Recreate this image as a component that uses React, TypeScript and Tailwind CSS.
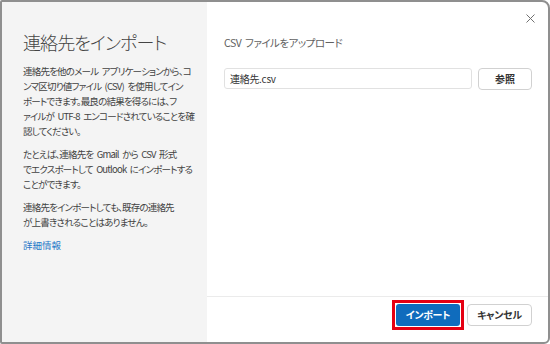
function CloseIcon() {
    return (
        <svg width="9" height="9" viewBox="0 0 9 9" className="block">
            <path d="M0.5 0.5L8.5 8.5M8.5 0.5L0.5 8.5" stroke="#707070" strokeWidth="1" fill="none"/>
        </svg>
    )
}

function ImportDialog() {
    return (
        <div className="w-[550px] h-[344px] flex border-2 border-[#8f8f8f] rounded-tr-[8px] rounded-br-[6px] rounded-l-[2px] overflow-hidden bg-white font-['Noto_Sans_CJK_JP','Noto_Sans',sans-serif] [font-feature-settings:'palt'] text-[#424242]">
            <div className="w-[205px] shrink-0 bg-[#f4f4f4] pl-[21px] pt-[27px]">
                <h1 className="text-[18px] leading-[26px] font-light tracking-[-0.9px] text-[#444] whitespace-nowrap">連絡先をインポート</h1>

                <div className="mt-[9px] text-[9.5px] leading-[15px] tracking-[-0.8px] [word-spacing:2px] whitespace-nowrap">
                    <p>
                        連絡先を他のメール アプリケーションから、コ<br/>
                        ンマ区切り値ファイル (CSV) を使用してイン<br/>
                        ポートできます。最良の結果を得るには、フ<br/>
                        ァイルが UTF-8 エンコードされていることを確<br/>
                        認してください。
                    </p>
                    <p className="mt-[8px]">
                        たとえば、連絡先を Gmail から CSV 形式<br/>
                        でエクスポートして Outlook にインポートする<br/>
                        ことができます。
                    </p>
                    <p className="mt-[8px]">
                        連絡先をインポートしても、既存の連絡先<br/>
                        が上書きされることはありません。
                    </p>
                    <p className="mt-[8px] tracking-[0px] text-[#1f78c8]">詳細情報</p>
                </div>
            </div>

            <div className="flex-1 flex flex-col">
                <div className="flex justify-end pt-[12px] pr-[13px] h-[24px]">
                    <CloseIcon/>
                </div>
                <div className="flex-1 pl-[17px] pr-[16px]">
                    <h2 className="mt-[9px] text-[10.5px] leading-[16px] tracking-[-0.5px] [word-spacing:2px] text-[#616161]">CSV ファイルをアップロード</h2>
                    <div className="mt-[17px] flex gap-[6px]">
                        <div className="w-[248px] h-[21px] border border-[#e1e1e1] rounded-[3px] pl-[5px] text-[10px] tracking-[-0.3px] leading-[19px] text-[#333]">
                            連絡先.csv
                        </div>
                        <button className="w-[54px] h-[22px] border border-[#d1d1d1] rounded-[4px] text-[10px] font-bold text-[#333] leading-[20px]">
                            参照
                        </button>
                    </div>
                </div>

                <div className="h-[46px] border-t border-[#ebebeb] flex justify-end items-start gap-[3px] pt-[3px] pr-[16px]">
                    <div className="border-[3px] border-[#e50012] p-px">
                        <button className="w-[64px] h-[22px] bg-[#0f6cbd] rounded-[3px] text-white text-[10px] tracking-[-0.3px] font-bold leading-[22px] block">
                            インポート
                        </button>
                    </div>
                    <button className="mt-[4px] w-[65px] h-[22px] border border-[#d1d1d1] rounded-[4px] text-[10px] tracking-[-0.3px] font-bold text-[#333] leading-[20px]">
                        キャンセル
                    </button>
                </div>
            </div>
        </div>
    )
}

export default function App() {
    return <ImportDialog/>
}
